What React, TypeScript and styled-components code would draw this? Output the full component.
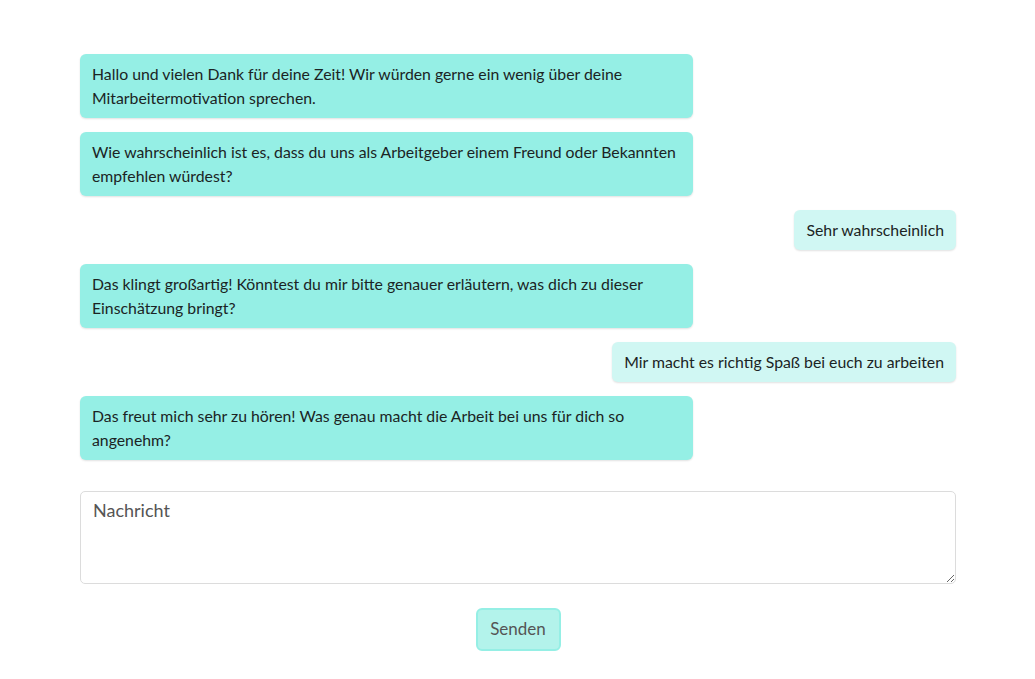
import React from "react";
import styled, { createGlobalStyle } from "styled-components";

const GlobalStyle = createGlobalStyle`
  body {
    margin: 0;
    background: #ffffff;
    font-family: Lato, "Open Sans", sans-serif;
    color: #222;
  }
`;

const Page = styled.div`
  padding: 54px 79px 28px 80px;
  display: flex;
  flex-direction: column;
`;

const Thread = styled.div`
  display: flex;
  flex-direction: column;
  gap: 14px;
`;

type bubble = {
  mine?: boolean;
};

const Bubble = styled.div<bubble>`
  align-self: ${(p) => (p.mine ? "flex-end" : "flex-start")};
  max-width: 70%;
  box-sizing: border-box;
  width: ${(p) => (p.mine ? "auto" : "70%")};
  background-color: ${(p) => (p.mine ? "#d0f7f3" : "#95efe5")};
  color: #1b2424;
  border-radius: 6px;
  padding: 8px 12px;
  font-size: 15.8px;
  line-height: 24px;
  box-shadow: 0 1px 2px rgba(0, 0, 0, 0.12);
`;

const MessageBox = styled.textarea`
  margin-top: 31px;
  box-sizing: border-box;
  width: 100%;
  height: 93px;
  border: 1px solid #dcdcdc;
  border-radius: 5px;
  padding: 6px 12px;
  font-family: Lato, "Open Sans", sans-serif;
  font-size: 18px;
  line-height: 24px;
  color: #444;
  outline: none;
  &::placeholder {
    color: #555;
  }
`;

const Actions = styled.div`
  display: flex;
  justify-content: center;
  margin-top: 24px;
`;

const SendButton = styled.button`
  height: 43px;
  width: 85px;
  padding: 0 0 3px;
  background-color: #b3f3eb;
  border: 2px solid #95efe5;
  border-radius: 6px;
  font-family: Lato, "Open Sans", sans-serif;
  font-size: 17px;
  color: #555;
  cursor: pointer;
`;

const messages: { text: string; mine?: boolean }[] = [
  {
    text: "Hallo und vielen Dank für deine Zeit! Wir würden gerne ein wenig über deine Mitarbeitermotivation sprechen.",
  },
  {
    text: "Wie wahrscheinlich ist es, dass du uns als Arbeitgeber einem Freund oder Bekannten empfehlen würdest?",
  },
  { text: "Sehr wahrscheinlich", mine: true },
  {
    text: "Das klingt großartig! Könntest du mir bitte genauer erläutern, was dich zu dieser Einschätzung bringt?",
  },
  { text: "Mir macht es richtig Spaß bei euch zu arbeiten", mine: true },
  {
    text: "Das freut mich sehr zu hören! Was genau macht die Arbeit bei uns für dich so angenehm?",
  },
];

function App() {
  return (
    <>
      <GlobalStyle />
      <Page>
        <Thread>
          {messages.map((m, i) => (
            <Bubble key={i} mine={m.mine}>
              {m.text}
            </Bubble>
          ))}
        </Thread>
        <MessageBox placeholder="Nachricht" />
        <Actions>
          <SendButton>Senden</SendButton>
        </Actions>
      </Page>
    </>
  );
}

export default App;
